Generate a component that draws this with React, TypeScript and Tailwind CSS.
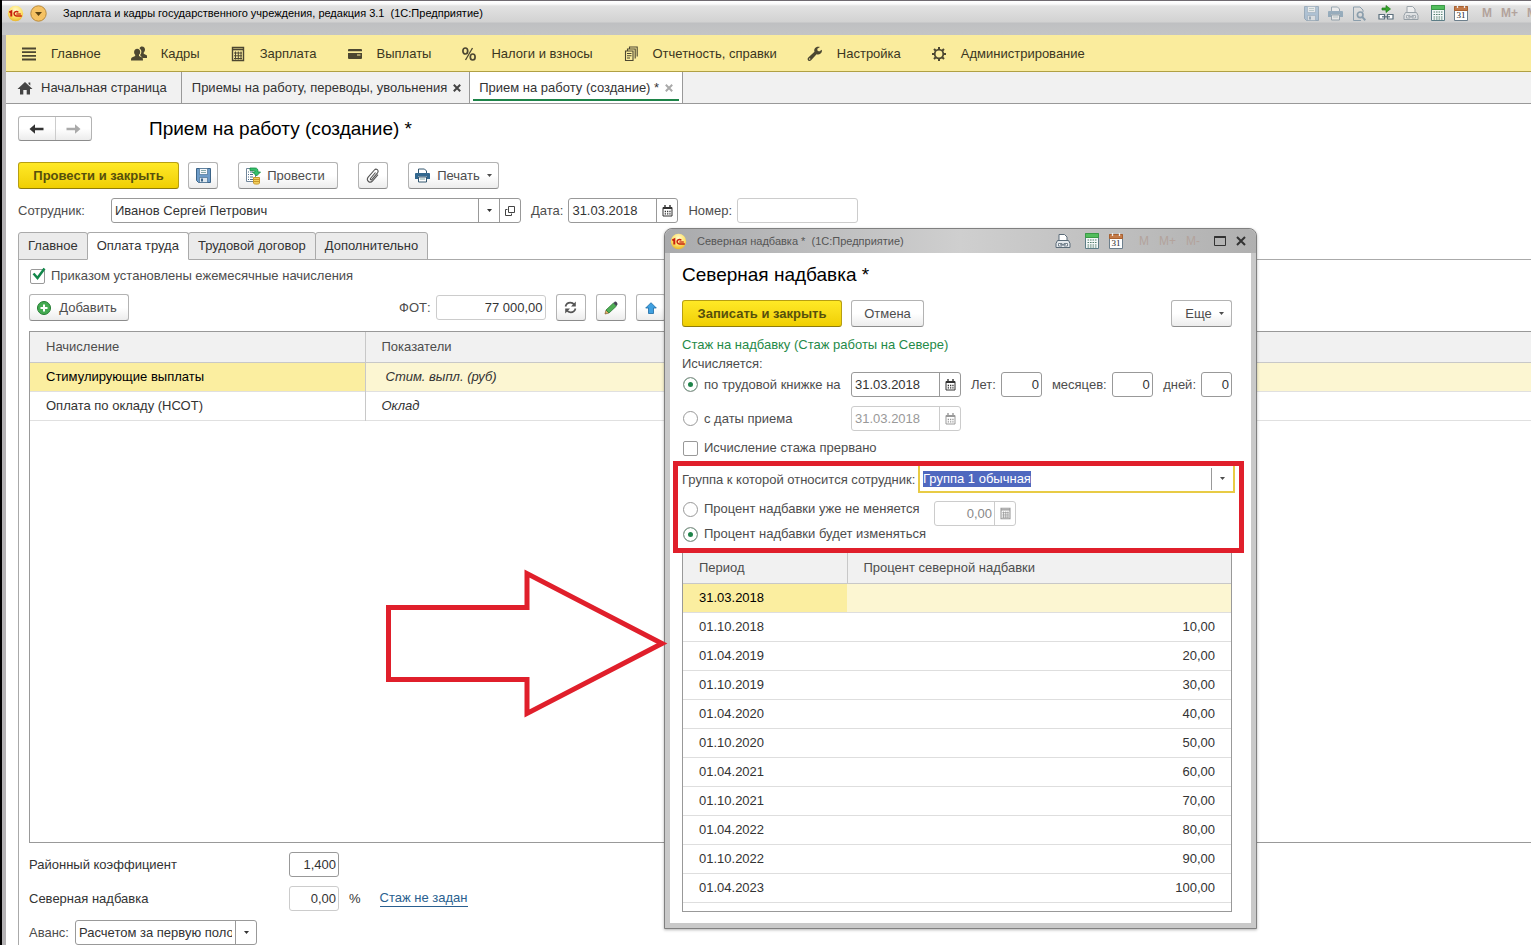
import { useEffect, useRef, type ReactNode } from 'react';

const TABS = ['Главное', 'Оплата труда', 'Трудовой договор', 'Дополнительно'];

const PERIODS = [
  { date: '31.03.2018', percent: '' },
  { date: '01.10.2018', percent: '10,00' },
  { date: '01.04.2019', percent: '20,00' },
  { date: '01.10.2019', percent: '30,00' },
  { date: '01.04.2020', percent: '40,00' },
  { date: '01.10.2020', percent: '50,00' },
  { date: '01.04.2021', percent: '60,00' },
  { date: '01.10.2021', percent: '70,00' },
  { date: '01.04.2022', percent: '80,00' },
  { date: '01.10.2022', percent: '90,00' },
  { date: '01.04.2023', percent: '100,00' },
];

/* ---------- icons ---------- */

const LogoIcon = () => (
  <svg width="17" height="17" viewBox="0 0 17 17" className="shrink-0">
    <defs>
      <radialGradient id="logo" cx="50%" cy="30%" r="70%">
        <stop offset="0" stopColor="#fffbd0" />
        <stop offset="0.6" stopColor="#ffe36a" />
        <stop offset="1" stopColor="#e9b52c" />
      </radialGradient>
    </defs>
    <circle cx="8.500" cy="8.500" r="7.700" fill="url(#logo)" />
    <path d="M2.300 7.300l2-1v5.200" fill="none" stroke="#c8200e" strokeWidth="2" />
    <path d="M11.300 7.400a2.300 2.300 0 1 0-1.800 3.600h5.300" fill="none" stroke="#c8200e" strokeWidth="1.500" />
    <path d="M9.300 9h4.500" stroke="#c8200e" strokeWidth="1.200" />
  </svg>
);

const MenuIcon = () => (
  <svg width="16" height="16" viewBox="0 0 16 16">
    <path d="M1 2.500h14M1 6.200h14M1 9.900h14M1 13.500h14" stroke="#4c4731" strokeWidth="1.800" />
  </svg>
);

const PeopleIcon = () => (
  <svg width="16" height="16" viewBox="0 0 16 16" fill="#4c4731">
    <path d="M11 0.500c2 0 3 1.400 3 3.100 0 1.300-.600 2.300-1.300 2.900v1.200L16 9.500V12h-4.500L9 9c1-1 1.500-2.500 1.300-4C10 3.500 9 2.600 8.500 2.200 9 1.100 9.900.500 11 .500z" />
    <path d="M6.200 2.800c1.900 0 3 1.400 3 3.100 0 1.200-.500 2.300-1.200 2.900v1.100l3.200 1.700c.600.400.800 1.500.800 2.900H0c0-1.500.200-2.600.900-3l3.300-1.600V8.800C3.500 8.200 3.100 7.100 3.100 5.900c0-1.700 1.200-3.100 3.100-3.100z" />
  </svg>
);

const CalcIcon = ({ className = 'text-[#4c4731]', size = 16 }: { className?: string; size?: number }) => (
  <svg width={size} height={size} viewBox="0 0 16 16" className={className} fill="none" stroke="currentColor">
    <path d="M2.500 1.500h11v13h-11z" strokeWidth="1.400" />
    <path d="M2.500 3.500h11" strokeWidth="1.600" />
    <path d="M4 7h8M4 9.800h8M4 12.500h8M5.500 5.500v8M8.300 5.500v8M11 5.500v8" strokeWidth="1" />
  </svg>
);

const CardIcon = () => (
  <svg width="16" height="16" viewBox="0 0 16 16" fill="#4c4731">
    <path d="M2 3h12a1 1 0 0 1 1 1v1.300H1V4a1 1 0 0 1 1-1zM1 7h14v5a1 1 0 0 1-1 1H2a1 1 0 0 1-1-1z" />
    <path d="M10 9h3.500" stroke="#faec9d" />
  </svg>
);

const PercentIcon = () => (
  <svg width="16" height="16" viewBox="0 0 16 16" fill="none" stroke="#4c4731">
    <ellipse cx="4.300" cy="5" rx="2.400" ry="3" strokeWidth="1.700" />
    <ellipse cx="11.700" cy="11" rx="2.400" ry="3" strokeWidth="1.700" />
    <path d="M11.500 2l-7 12" strokeWidth="1.300" />
  </svg>
);

const DocsIcon = () => (
  <svg width="16" height="16" viewBox="0 0 16 16" fill="none" stroke="#4c4731" strokeWidth="1.100">
    <path d="M2.500 5h7.500v9.500H2.500zM4.500 5V3h7.700v9.500M6.500 3V1h7.700v9.500" />
    <path d="M4 7.500h4.500M4 9.700h4.500M4 12h3" />
  </svg>
);

const WrenchIcon = () => (
  <svg width="16" height="16" viewBox="0 0 16 16" fill="#4c4731">
    <path d="M14.800 3.800l-2.700 1.700-1.700-.900-.100-1.900L13 1c-2-.800-4.200-.200-5.200 1.400-.700 1.100-.700 2.300-.300 3.400L1.300 11.500c-.900.900-.900 2.200-.100 3s2.100.700 2.900-.200l5.500-6c1.300.400 2.900.300 4-.700 1.200-1 1.600-2.400 1.200-3.800zM2.700 13.700a.700.700 0 1 1 0-1.400.700.700 0 0 1 0 1.400z" />
  </svg>
);

const GearIcon = () => (
  <svg width="16" height="16" viewBox="0 0 16 16" fill="none" stroke="#4c4731">
    <circle cx="8" cy="8" r="4.300" strokeWidth="1.800" />
    <path d="M8 1v2.500M8 12.500V15M1 8h2.500M12.500 8H15M3 3l1.800 1.800M11.200 11.200L13 13M3 13l1.800-1.800M11.200 4.800L13 3" strokeWidth="2" />
  </svg>
);

const HomeIcon = () => (
  <svg width="16" height="14" viewBox="0 0 16 14" fill="#444">
    <path d="M8 1l7.500 7H13v5.500H9.700V9H6.300v4.500H3V8H.500zM11.500 1.500h1.800v3l-1.800-1.600z" />
  </svg>
);

const CalendarIcon = () => (
  <svg width="11" height="12" viewBox="0 0 11 12" fill="none" stroke="currentColor">
    <path d="M1 2.500h9v8.500H1z" />
    <path d="M1 3.200h9" strokeWidth="1.600" />
    <path d="M3 0v2M8 0v2" strokeWidth="1.400" />
    <path d="M2.700 6.500h6M2.700 8.800h6" strokeWidth="1.300" strokeDasharray="1.300 1" />
  </svg>
);

const Caret = () => (
  <svg width="5" height="3" viewBox="0 0 5 3" className="shrink-0" fill="currentColor">
    <path d="M0 0h5L2.500 3z" />
  </svg>
);

const CrossIcon = ({ className }: { className: string }) => (
  <svg width="8" height="8" viewBox="0 0 8 8" className={className} stroke="currentColor" strokeWidth="2">
    <path d="M.800.800l6.400 6.400M7.200.800L.800 7.200" />
  </svg>
);

const ArrowIcon = ({ className }: { className: string }) => (
  <svg width="15" height="10" viewBox="0 0 15 10" className={className} fill="currentColor">
    <path d="M.500 5L6 .300v3.500h8.500v2.400H6v3.500z" />
  </svg>
);

const DiskIcon = ({ muted = false }: { muted?: boolean }) => (
  <svg width="15" height="15" viewBox="0 0 15 15" className={muted ? 'opacity-40' : ''}>
    <path d="M.500.500h14v14h-12l-2-2z" fill="#6d9cc9" stroke="#3c6488" />
    <path d="M3.500.500h8v6h-8z" fill="#f5f8fb" stroke="#3c6488" strokeWidth=".6" />
    <path d="M5 2.500h5M5 4.500h5" stroke="#8aa" />
    <path d="M3.500 9.500h8v5h-8z" fill="#dfe8ef" stroke="#3c6488" strokeWidth=".6" />
    <path d="M5 10.500h2v3H5z" fill="#3c6488" />
  </svg>
);

const PrintIcon = ({ muted = false }: { muted?: boolean }) => (
  <svg width="15" height="15" viewBox="0 0 15 15" className={muted ? 'opacity-40' : ''}>
    <path d="M3.500 5V1h6l2 2v2" fill="#fff" stroke="#33566f" />
    <path d="M1 5h13c.500 0 1 .500 1 1v5h-3V8.500H3V11H0V6c0-.500.500-1 1-1z" fill="#33688f" />
    <path d="M3.500 9h8v5h-8z" fill="#fff" stroke="#33566f" />
    <path d="M5 11h5" stroke="#8aa" />
  </svg>
);

const PreviewIcon = () => (
  <svg width="14" height="15" viewBox="0 0 14 15" fill="none" stroke="#8b9eac">
    <path d="M9 14.500H1.500V1H8l3 3v2" />
    <circle cx="8.200" cy="8.800" r="2.800" strokeWidth="1.700" />
    <path d="M10.300 11l3 3.200" strokeWidth="2" />
  </svg>
);

const LinkIcon = () => (
  <svg width="16" height="16" viewBox="0 0 16 16">
    <path d="M4 3h4V.500L12.500 4 8 7.500V5H4z" fill="#35a52b" stroke="#1f7a1a" strokeWidth=".7" />
    <path d="M1 9.500h5.500v4.500H1zM9.500 9.500H15v4.500H9.500z" fill="#fff" stroke="#5b6f7c" strokeWidth="1.200" />
    <path d="M4 11.800h8" stroke="#5b6f7c" strokeWidth="1.200" />
  </svg>
);

const LinkPrintIcon = ({ muted = false }: { muted?: boolean }) => (
  <svg width="16" height="16" viewBox="0 0 16 16" className={muted ? 'opacity-50' : ''}>
    <path d="M4 8V1.500h5.500L12 4v4" fill="#fff" stroke="#5a6b78" />
    <path d="M2.500 7.500h11l1.500 3v4H1v-4z" fill="#e4e9ed" stroke="#5a6b78" />
    <path d="M3.500 10.500h3.500v2.500H3.500zM9 10.500h3.500v2.500H9zM5 11.700h6" fill="#fff" stroke="#5a6b78" strokeWidth=".8" />
  </svg>
);

const GreenCalcIcon = () => (
  <svg width="14" height="16" viewBox="0 0 14 16">
    <path d="M.500.500h13v15H.500z" fill="#f4f8f8" stroke="#5c7d86" />
    <path d="M.500.500h13v4H.500z" fill="#52bd5c" stroke="#3a9a46" />
    <path d="M2.500 7h9M2.500 9.500h9M2.500 12h9M2.500 14h9" stroke="#54806f" strokeWidth="1.200" strokeDasharray="1.600 .900" />
  </svg>
);

const DayIcon = () => (
  <svg width="14" height="16" viewBox="0 0 14 16">
    <path d="M.500 1.500h13v14H.500z" fill="#fff" stroke="#6d7f8c" />
    <path d="M.500 1.500h13v4H.500z" fill="#c47a48" stroke="#a8602f" />
    <path d="M3.500 0v3M10.500 0v3" stroke="#eee" strokeWidth="1.300" />
    <text x="7" y="13" textAnchor="middle" fontFamily="Liberation Serif" fontSize="9" fill="#222">31</text>
  </svg>
);

const PostIcon = () => (
  <svg width="16" height="18" viewBox="0 0 16 18">
    <path d="M1.500 1.500h9v13h-9z" fill="#fff" stroke="#71869a" />
    <path d="M3 5h1M3 7.500h1M3 10h1M3 12.500h1M5 5h3M5 7.500h3M5 10h3M5 12.500h3" stroke="#4c6c86" />
    <path d="M5 1h5c2.500 0 3 1.500 3 4h2.500l-4 4-4-4H10c0-1-.500-1.500-2-1.500H5z" fill="#35c06a" stroke="#148a43" strokeWidth=".8" />
    <path d="M8.500 10.500h6v5.500c0 1.500-6 1.500-6 0z" fill="#f2cf5c" stroke="#c9982a" />
    <path d="M8.500 12.500h6M8.500 14.500h6" stroke="#c9982a" />
  </svg>
);

const ClipIcon = () => (
  <svg width="14" height="16" viewBox="0 0 14 16" fill="none" stroke="#555" strokeWidth="1.100">
    <path d="M9.500 4.500l-5 6c-.600.900.500 1.900 1.300 1.100l5.700-6.800c1.800-2.600-1.300-4.800-3.100-2.800L2.200 9.200c-2.500 3.400 1.700 6.700 4.400 3.700L12 6.700" />
  </svg>
);

const RefreshIcon = () => (
  <svg width="13" height="13" viewBox="0 0 13 13" fill="none" stroke="#555" strokeWidth="1.700">
    <path d="M1.500 5.500C2.200 3 4 1.700 6.300 1.700c1.700 0 3 .700 4 2M11.500 7.500c-.700 2.500-2.500 3.800-4.800 3.800-1.700 0-3-.700-4-2" />
    <path d="M11.800.500v5H7zM1.200 12.500v-5H6z" fill="#555" stroke="none" />
  </svg>
);

const PencilIcon = () => (
  <svg width="14" height="14" viewBox="0 0 14 14">
    <path d="M1 13l1-4 3 3z" fill="#e3b36b" stroke="#6d4a1d" strokeWidth=".6" />
    <path d="M2 9l7.500-7 3 3L5 12z" fill="#4fae55" stroke="#2c7a36" strokeWidth=".8" />
    <path d="M9.500 2L11 .600c.700-.600 3 1.500 2.400 2.600L12.300 5z" fill="#445" />
  </svg>
);

const UpIcon = () => (
  <svg width="12" height="12" viewBox="0 0 12 12">
    <path d="M6 .700L11.300 6H8.500v5.500h-5V6H.700z" fill="#3fa0e0" stroke="#1c6aa5" strokeWidth=".8" />
  </svg>
);

const PlusIcon = () => (
  <svg width="14" height="14" viewBox="0 0 14 14">
    <circle cx="7" cy="7" r="6.500" fill="#44ab52" stroke="#237a31" />
    <path d="M7 3.500v7M3.500 7h7" stroke="#fff" strokeWidth="2" />
  </svg>
);

const OpenIcon = () => (
  <svg width="10" height="10" viewBox="0 0 10 10" fill="none" stroke="#444">
    <path d="M3.500.500h6v6h-6z" />
    <path d="M2.500 3.500h-2v6h6v-2" />
  </svg>
);

/* ---------- shared controls ---------- */

const Button = ({ children, label, className = '' }: { children: ReactNode; label?: string; className?: string }) => (
  <button
    type="button"
    aria-label={label}
    className={`flex h-[27px] shrink-0 items-center justify-center rounded-[3px] border border-[#b3b3b3] border-b-[#8c8c8c] bg-gradient-to-b from-white from-50% to-[#ececec] text-[#4d4d4d] ${className}`}
  >
    {children}
  </button>
);

const PrimaryButton = ({ children, className = '' }: { children: ReactNode; className?: string }) => (
  <button
    type="button"
    className={`h-[27px] shrink-0 rounded-[3px] border border-[#b79f12] border-b-[#8f7c0a] bg-gradient-to-b from-[#ffe925] to-[#f0cf00] font-bold text-[#57500c] ${className}`}
  >
    {children}
  </button>
);

const DateField = ({ id, label, disabled = false }: { id: string; label: string; disabled?: boolean }) => (
  <span
    className={`flex h-[25px] w-[110px] shrink-0 rounded-[3px] border bg-white ${
      disabled ? 'border-[#ccc] text-[#999]' : 'border-[#999] text-[#333]'
    }`}
  >
    <input id={id} aria-label={label} disabled={disabled} defaultValue="31.03.2018" className="w-0 flex-1 px-[3px] outline-none" />
    <button
      type="button"
      disabled={disabled}
      aria-label="Выбрать дату"
      className={`flex w-[21px] items-center justify-center border-l ${disabled ? 'border-[#ccc]' : 'border-[#999]'}`}
    >
      <CalendarIcon />
    </button>
  </span>
);

const NumberField = ({ id, value, className }: { id: string; value: string; className: string }) => (
  <input
    id={id}
    defaultValue={value}
    className={`h-[25px] shrink-0 rounded-[3px] border bg-white px-[2px] text-right text-[#333] outline-none ${className}`}
  />
);

const Radio = ({ name, label, checked = false, className = '' }: { name: string; label: string; checked?: boolean; className?: string }) => (
  <label className={`flex h-4 shrink-0 items-center gap-[6px] whitespace-nowrap ${className}`}>
    <input
      type="radio"
      name={name}
      defaultChecked={checked}
      className="ml-px size-[15px] shrink-0 appearance-none rounded-full border border-[#999] bg-white checked:bg-[#1e8449] checked:shadow-[inset_0_0_0_4px_white]"
    />
    {label}
  </label>
);

const Divider = () => <span className="h-4 w-px bg-[#a5a5a5]" />;

/* ---------- main window ---------- */

const MENU = [
  { label: 'Главное', icon: <MenuIcon /> },
  { label: 'Кадры', icon: <PeopleIcon /> },
  { label: 'Зарплата', icon: <CalcIcon /> },
  { label: 'Выплаты', icon: <CardIcon /> },
  { label: 'Налоги и взносы', icon: <PercentIcon /> },
  { label: 'Отчетность, справки', icon: <DocsIcon /> },
  { label: 'Настройка', icon: <WrenchIcon /> },
  { label: 'Администрирование', icon: <GearIcon /> },
];

const TitleBar = () => (
  <header className="flex h-[35px] shrink-0 items-start overflow-hidden whitespace-nowrap border-t border-[#6f6a70] bg-[linear-gradient(to_bottom,#ffffff_0,#fafafa_3px,#e2e2e2_5px,#d2d2d2_21px,#bfc0c2_22px,#c4c5c6_34px)]">
    <div className="flex h-6 flex-1 items-center pl-[5px]">
      <LogoIcon />
      <svg width="17" height="17" viewBox="0 0 17 17" className="ml-[6px]">
        <circle cx="8.500" cy="8.500" r="7.700" fill="#f5c263" stroke="#b98a3c" />
        <path d="M5 7h7l-3.500 4z" fill="#5b4313" />
      </svg>
      <span className="ml-[5px]"><Divider /></span>
      <span className="ml-[11px] text-[11px] text-black">Зарплата и кадры государственного учреждения, редакция 3.1&nbsp; (1С:Предприятие)</span>
      <div className="-mr-[10px] ml-auto flex items-center gap-[9px]">
        <DiskIcon muted />
        <PrintIcon muted />
        <PreviewIcon />
        <span className="-mx-[3px]"><Divider /></span>
        <LinkIcon />
        <LinkPrintIcon muted />
        <span className="-mx-[3px]"><Divider /></span>
        <GreenCalcIcon />
        <DayIcon />
        <span className="-mx-[2px]"><Divider /></span>
        <span className="text-xs font-bold text-[#b3a39c]">M</span>
        <span className="text-xs font-bold text-[#b3a39c]">M+</span>
        <span className="text-xs font-bold text-[#b3a39c]">M-</span>
      </div>
    </div>
  </header>
);

const WindowTabs = () => (
  <div className="flex h-8 shrink-0 items-stretch border-b border-[#999] bg-[#f1f1f1] text-[#333]">
    <button type="button" className="flex items-center gap-2 border-r border-[#999] pl-[11px] pr-[14px]">
      <HomeIcon />
      Начальная страница
    </button>
    <div className="flex items-center gap-[6px] border-r border-[#999] pl-[10px] pr-2">
      <button type="button">Приемы на работу, переводы, увольнения</button>
      <button type="button" aria-label="Закрыть вкладку"><CrossIcon className="text-[#444]" /></button>
    </div>
    <div className="border-r border-[#999] bg-white px-[3px]">
      <div className="flex h-[29px] items-center gap-[6px] border-b-2 border-[#1e8449] px-[6px] pt-1">
        <button type="button">Прием на работу (создание) *</button>
        <button type="button" aria-label="Закрыть вкладку"><CrossIcon className="text-[#aaa]" /></button>
      </div>
    </div>
  </div>
);

const AccrualTable = () => (
  <div className="min-h-[200px] flex-1 border border-r-0 border-[#999]">
    <table className="w-full table-fixed border-collapse text-left">
      <thead>
        <tr className="h-[30px] border-b border-[#c8c8c8] bg-[#f1f1f1] text-[#4d4d4d]">
          <th className="w-[335px] border-r border-[#c8c8c8] px-4 font-normal">Начисление</th>
          <th className="px-4 font-normal">Показатели</th>
        </tr>
      </thead>
      <tbody>
        <tr className="h-[29px] border-b border-[#e0e0e0]">
          <td className="border-r border-[#c8c8c8] bg-[#fbeea0] px-4 text-black">Стимулирующие выплаты</td>
          <td className="bg-[#fcf6d2] px-5 italic text-[#333]">Стим. выпл. (руб)</td>
        </tr>
        <tr className="h-[29px] border-b border-[#e0e0e0]">
          <td className="border-r border-[#c8c8c8] px-4 text-[#333]">Оплата по окладу (НСОТ)</td>
          <td className="px-4 italic text-[#333]">Оклад</td>
        </tr>
      </tbody>
    </table>
  </div>
);

/* ---------- dialog ---------- */

const AllowanceDialog = () => {
  const groupRef = useRef<HTMLInputElement>(null);

  // The group field opens focused with its whole text selected
  useEffect(() => {
    groupRef.current?.focus();
    groupRef.current?.select();
  }, []);

  return (
    <section
      role="dialog"
      aria-label="Северная надбавка"
      className="absolute left-[662px] top-[228px] w-[593px] rounded-t-lg border border-[#808080] bg-[#c9c9c9] px-[5px] pb-[5px] shadow-[0_1px_3px_rgba(0,0,0,0.3)]"
    >
      <div className="-mx-[5px] flex h-6 items-center rounded-t-lg bg-[linear-gradient(to_right,#a9aaac,#cfcfcf_50%,#b0b0b0)] pl-[5px] pr-[10px]">
        <LogoIcon />
        <span className="ml-[10px] whitespace-nowrap text-[11px] text-[#555]">Северная надбавка *&nbsp; (1С:Предприятие)</span>
        <div className="ml-auto flex items-center gap-[10px]">
          <LinkPrintIcon />
          <span className="-mx-[3px]"><Divider /></span>
          <GreenCalcIcon />
          <DayIcon />
          <span className="-mx-[2px]"><Divider /></span>
          <span className="text-xs text-[#b3a39c]">M</span>
          <span className="text-xs text-[#b3a39c]">M+</span>
          <span className="text-xs text-[#b3a39c]">M-</span>
          <span className="-mx-[3px]"><Divider /></span>
          <button type="button" aria-label="Развернуть">
            <svg width="12" height="10" viewBox="0 0 12 10" fill="none" stroke="#333">
              <path d="M.500.500h11v9H.500z" />
              <path d="M.500 1h11" strokeWidth="2" />
            </svg>
          </button>
          <button type="button" aria-label="Закрыть">
            <svg width="10" height="10" viewBox="0 0 10 10" stroke="#333" strokeWidth="2">
              <path d="M1 1l8 8M9 1L1 9" />
            </svg>
          </button>
        </div>
      </div>

      <div className="bg-white pb-[11px] pl-3 pr-[19px] pt-2 text-[#4d4d4d]">
        <h2 className="text-[19px] leading-[27px] text-black">Северная надбавка *</h2>
        <div className="mt-3 flex gap-[9px]">
          <PrimaryButton className="w-[160px]">Записать и закрыть</PrimaryButton>
          <Button className="w-[73px]">Отмена</Button>
          <Button className="ml-auto w-[61px] gap-[7px] pl-[6px]">
            Еще <Caret />
          </Button>
        </div>
        <p className="mt-2 leading-5 text-[#1f8a48]">Стаж на надбавку (Стаж работы на Севере)</p>
        <p className="leading-[17px]">Исчисляется:</p>

        <div className="flex items-center">
          <Radio name="start" label="по трудовой книжке на" checked className="w-[169px]" />
          <DateField id="book-date" label="Дата по трудовой книжке" />
          <label htmlFor="years" className="ml-[10px] mr-[5px]">Лет:</label>
          <NumberField id="years" value="0" className="w-[41px] border-[#999]" />
          <label htmlFor="months" className="ml-[10px] mr-[5px]">месяцев:</label>
          <NumberField id="months" value="0" className="w-[41px] border-[#999]" />
          <label htmlFor="days" className="ml-auto mr-[5px]">дней:</label>
          <NumberField id="days" value="0" className="w-[31px] border-[#999]" />
        </div>
        <div className="mt-[9px] flex items-center">
          <Radio name="start" label="с даты приема" className="w-[169px]" />
          <DateField id="hire-date" label="Дата приема" disabled />
        </div>
        <label className="mt-[9px] flex h-4 items-center gap-[6px]">
          <input type="checkbox" className="ml-px size-[15px] appearance-none rounded-[2px] border border-[#999] bg-white" />
          Исчисление стажа прервано
        </label>

        <div className="-ml-[9px] -mr-3 mt-[5px] border-[5px] border-[#e01f2b] px-1 pb-[6px]">
          <div className="flex items-center">
            <label htmlFor="group" className="w-[236px] shrink-0 whitespace-nowrap">Группа к которой относится сотрудник:</label>
            <span className="flex h-[27px] flex-1 items-center border-2 border-t-0 border-[#e8cb45] pl-[3px]">
              <input
                id="group"
                ref={groupRef}
                defaultValue="Группа 1 обычная"
                className="w-0 flex-1 text-[#333] outline-none selection:bg-[#4f68bf] selection:text-white"
              />
              <button type="button" aria-label="Выбрать группу" className="flex h-[22px] w-[22px] items-center justify-center border-l border-[#999]">
                <Caret />
              </button>
            </span>
          </div>
          <div className="mt-2 flex items-start">
            <Radio name="percent" label="Процент надбавки уже не меняется" className="w-[252px]" />
            <span className="flex h-[25px] w-[82px] rounded-[3px] border border-[#ccc] text-[#888]">
              <input disabled aria-label="Процент надбавки" defaultValue="0,00" className="w-0 flex-1 px-[2px] text-right" />
              <button type="button" disabled aria-label="Калькулятор" className="flex w-[21px] items-center justify-center border-l border-[#ccc]">
                <CalcIcon className="text-[#999]" size={13} />
              </button>
            </span>
          </div>
          <Radio name="percent" label="Процент надбавки будет изменяться" checked />
        </div>

        <div className="border border-t-0 border-[#999] pb-2">
          <table className="w-full table-fixed border-collapse text-[#333]">
            <thead>
              <tr className="h-[30px] border-b border-[#c8c8c8] bg-[#f1f1f1] text-left text-[#4d4d4d]">
                <th className="w-[164px] border-r border-[#c8c8c8] px-4 font-normal">Период</th>
                <th className="px-4 font-normal">Процент северной надбавки</th>
              </tr>
            </thead>
            <tbody>
              {PERIODS.map((row, i) => (
                <tr key={row.date} className={`h-[29px] border-b border-[#dedede] ${i === 0 ? 'bg-[#fcf6d2]' : ''}`}>
                  <td className={`px-4 ${i === 0 ? 'bg-[#fbeea0] text-black' : ''}`}>{row.date}</td>
                  <td className="px-4 text-right">{row.percent}</td>
                </tr>
              ))}
            </tbody>
          </table>
        </div>
      </div>
    </section>
  );
};

export default function App() {
  return (
    <div className="relative flex min-h-screen flex-col overflow-hidden border-l-2 border-black bg-white font-['Liberation_Sans',Arial,sans-serif] text-[13px] leading-4">
      <TitleBar />
      <div className="flex flex-1 flex-col border-l-4 border-[#b4b2b4]">
        <nav className="flex h-[37px] shrink-0 items-center gap-[30px] whitespace-nowrap border-b border-[#b0a044] bg-[#faec9d] pl-[15px] pt-px text-[#3b3621]">
          {MENU.map(item => (
            <a key={item.label} href="#" className="flex items-center gap-[14px]">
              {item.icon}
              {item.label}
            </a>
          ))}
        </nav>
        <WindowTabs />

        <main className="flex flex-1 flex-col pl-3 pt-3">
          <div className="flex items-center">
            <div className="flex h-[25px] w-[74px] rounded-[3px] border border-[#b3b3b3] border-b-[#8c8c8c] bg-gradient-to-b from-white from-50% to-[#ececec]">
              <button type="button" aria-label="Назад" className="flex flex-1 items-center justify-center border-r border-[#ccc]">
                <ArrowIcon className="text-[#333]" />
              </button>
              <button type="button" aria-label="Вперед" className="flex flex-1 items-center justify-center">
                <ArrowIcon className="rotate-180 text-[#aaa]" />
              </button>
            </div>
            <h1 className="ml-[57px] text-[19px] leading-[25px] text-black">Прием на работу (создание) *</h1>
          </div>

          <div className="mt-[21px] flex gap-5">
            <div className="flex gap-[9px]">
              <PrimaryButton className="w-[161px]">Провести и закрыть</PrimaryButton>
              <Button label="Записать" className="w-[30px]"><DiskIcon /></Button>
            </div>
            <Button className="w-[100px] gap-[6px] pr-[6px]"><PostIcon /> Провести</Button>
            <Button label="Файлы" className="w-[30px]"><ClipIcon /></Button>
            <Button className="w-[91px] gap-[7px]"><PrintIcon /> Печать <Caret /></Button>
          </div>

          <div className="mt-[9px] flex items-center text-[#4d4d4d]">
            <label htmlFor="employee" className="w-[93px]">Сотрудник:</label>
            <span className="flex h-[25px] w-[410px] rounded-[3px] border border-[#999] text-[#333]">
              <input id="employee" defaultValue="Иванов Сергей Петрович" className="w-0 flex-1 px-[3px] outline-none" />
              <button type="button" aria-label="Выбрать сотрудника" className="flex w-[21px] items-center justify-center border-l border-[#999]">
                <Caret />
              </button>
              <button type="button" aria-label="Открыть" className="flex w-[21px] items-center justify-center border-l border-[#999]">
                <OpenIcon />
              </button>
            </span>
            <label htmlFor="doc-date" className="ml-[10px] mr-[5px]">Дата:</label>
            <DateField id="doc-date" label="Дата" />
            <label htmlFor="doc-number" className="ml-[10px] mr-[5px]">Номер:</label>
            <input id="doc-number" className="h-[25px] w-[121px] rounded-[3px] border border-[#ccc] px-[3px]" />
          </div>

          <div role="tablist" className="mt-[9px] flex h-7">
            {TABS.map(tab => (
              <button
                key={tab}
                type="button"
                role="tab"
                aria-selected={tab === 'Оплата труда'}
                className={`-mr-px rounded-t-[3px] border px-[9px] text-[#333] ${
                  tab === 'Оплата труда' ? 'z-10 border-[#aaa] border-b-white bg-white' : 'border-[#aaa] bg-[#ebebeb]'
                }`}
              >
                {tab}
              </button>
            ))}
          </div>

          <div className="-mt-px flex flex-1 flex-col border-l border-t border-[#aaa] pl-[10px] pt-2 text-[#4d4d4d]">
            <label className="relative flex h-4 items-center gap-[6px] self-start">
              <input type="checkbox" defaultChecked className="peer ml-px size-[15px] appearance-none rounded-[2px] border border-[#999] bg-white" />
              <svg width="16" height="16" viewBox="0 0 16 16" className="absolute left-px -top-px hidden peer-checked:block" fill="none" stroke="#12874a">
                <path d="M3.500 6.500l4 4.500L14.500 1.500" strokeWidth="2.500" />
              </svg>
              Приказом установлены ежемесячные начисления
            </label>

            <div className="mt-[10px] flex items-center">
              <Button className="w-[100px] gap-2 pr-1"><PlusIcon /> Добавить</Button>
              <label htmlFor="fot" className="ml-[270px] mr-[5px]">ФОТ:</label>
              <NumberField id="fot" value="77 000,00" className="mr-[10px] w-[110px] border-[#ccc]" />
              <div className="flex gap-[10px]">
                <Button label="Обновить" className="w-[30px]"><RefreshIcon /></Button>
                <Button label="Изменить" className="w-[30px]"><PencilIcon /></Button>
                <Button label="Вверх" className="w-[30px]"><UpIcon /></Button>
              </div>
            </div>

            <div className="mt-[10px] flex flex-1 flex-col">
              <AccrualTable />
            </div>

            <div className="mt-[9px] flex items-center text-[#333]">
              <label htmlFor="district" className="w-[260px]">Районный коэффициент</label>
              <NumberField id="district" value="1,400" className="w-[50px] border-[#999]" />
            </div>
            <div className="mt-[9px] flex items-center text-[#333]">
              <label htmlFor="north" className="w-[260px]">Северная надбавка</label>
              <NumberField id="north" value="0,00" className="w-[50px] border-[#ccc]" />
              <span className="ml-[10px]">%</span>
              <a href="#" className="ml-[19px] border-b border-[#2a5f8f] text-[#2a5f8f]">Стаж не задан</a>
            </div>
            <div className="mt-[9px] flex items-center">
              <label htmlFor="advance" className="w-[46px]">Аванс:</label>
              <span className="relative flex h-[25px] w-[182px] rounded-[3px] border border-[#999] text-[#333]">
                <select id="advance" className="mr-6 w-0 flex-1 appearance-none overflow-hidden text-clip pl-[3px] outline-none">
                  <option>Расчетом за первую половину месяца</option>
                </select>
                <span className="pointer-events-none absolute inset-y-0 right-0 flex w-[21px] items-center justify-center border-l border-[#999]">
                  <Caret />
                </span>
              </span>
            </div>
          </div>
        </main>
      </div>

      <AllowanceDialog />

      <svg width="286" height="150" viewBox="0 0 286 150" className="pointer-events-none absolute left-[382px] top-[568px]" fill="none" stroke="#e01f2b" strokeWidth="5">
        <path d="M4.500 39.500h138.500V5.500l135 70-135 70v-34H4.500z" />
      </svg>
    </div>
  );
}
